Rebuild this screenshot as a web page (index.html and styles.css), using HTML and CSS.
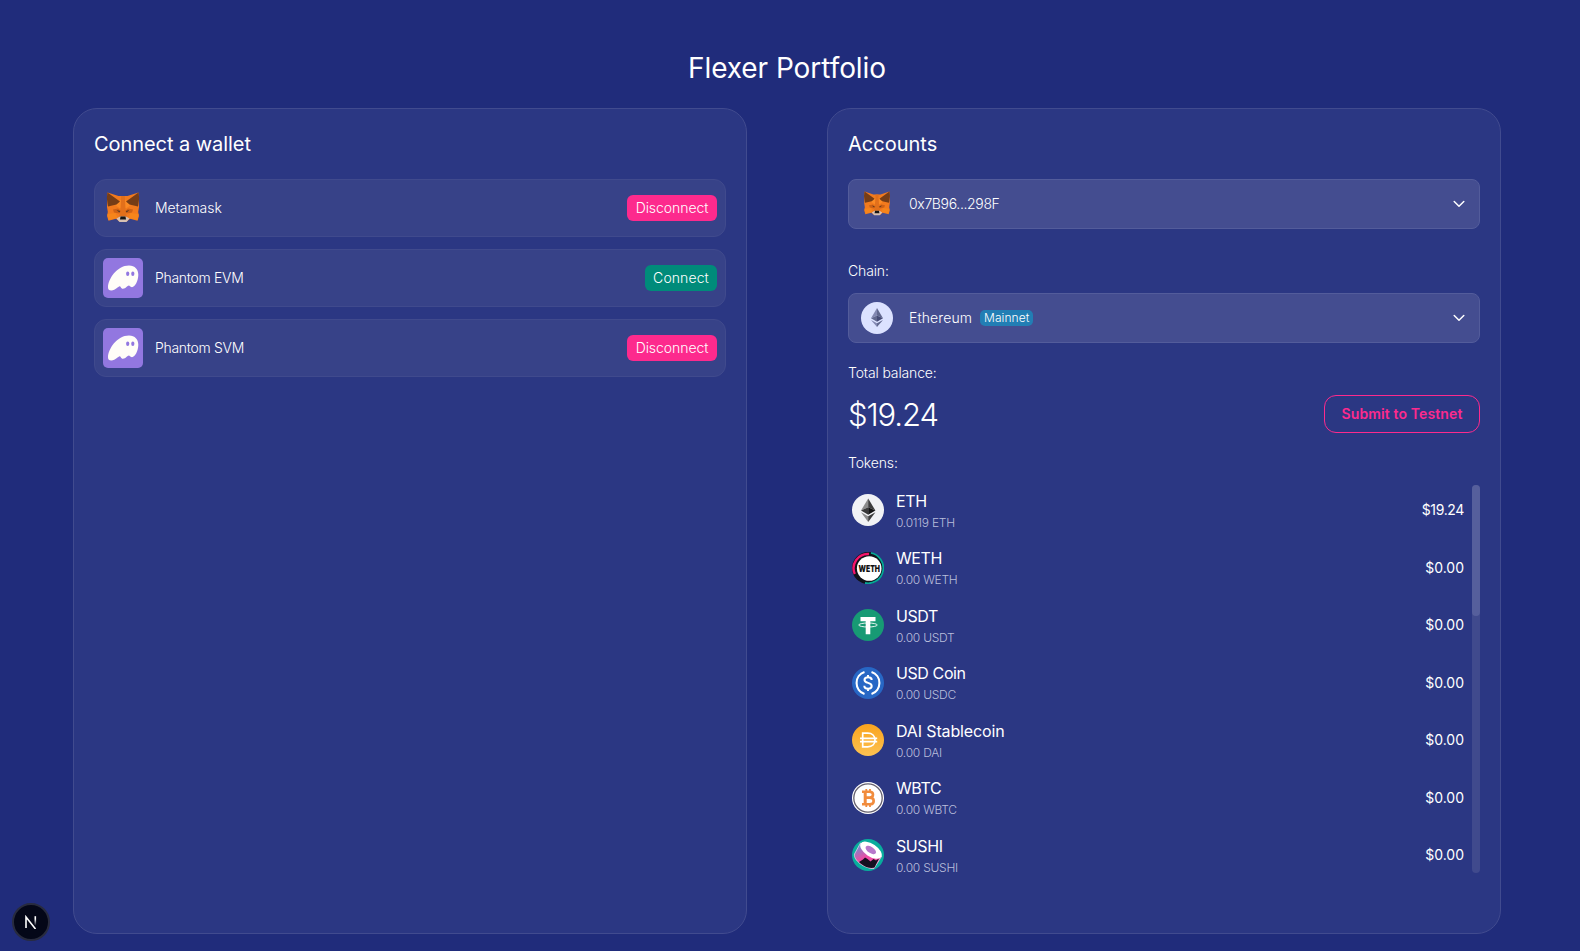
FILE: index.html
```html
<!DOCTYPE html>
<html lang="en">
<head>
<meta charset="utf-8">
<title>Flexer Portfolio</title>
<link rel="stylesheet" href="styles.css">
</head>
<body>
<svg class="defs" width="0" height="0" aria-hidden="true">
  <symbol id="fox" viewBox="0 0 40 40">
    <path fill="#f27a1d" d="M4.500 4.500 15.500 8h9L35.500 4.500 36 19l-.8 5 .8 4-1.500 4.800-7.500-2-3 2.500h-8l-3-2.500-7.500 2L4 28l.8-4L4 19z"/>
    <path fill="#fb8a24" d="m12 17 5.500-5h5l5.500 5-4.500 3h-7z"/>
    <path fill="#e2701b" d="M18.200 8h3.600l.8 14 1.400 7h-8l1.400-7z"/>
    <path fill="#cd6116" d="m10 21.500 5-1 3 2.500-2 2.500-5-1zM30 21.500l-5-1-3 2.500 2 2.500 5-1z"/>
    <path fill="#f6851b" d="m4.500 26 8-1 2 5-9 2zM35.500 26l-8-1-2 5 9 2z"/>
    <path fill="#763d16" d="M4.500 4.500 17 13.500 13.500 16.500 5 18.500 3.800 10zM35.500 4.500 23 13.500l3.500 3 8.500 2 1.200-8.500z"/>
    <path fill="#503522" d="m13.500 22 3.500 1-.5 1.500zM26.500 22 23 23l.5 1.500z"/>
    <path fill="#d7c1b3" d="m13.500 30.500 3.500-2h6l3.500 2-3 3.500h-7z"/>
    <path fill="#161616" d="m17.500 28.500h5l.5 3h-6z"/>
  </symbol>
  <symbol id="ghost" viewBox="0 0 40 40">
    <rect width="40" height="40" rx="5" fill="#9277e0"/>
    <path fill="#fffdf8" d="M5 29.500C5 21 14 7.500 26 7.500c6 0 9.300 4 9.300 9.300 0 6-3.300 12.400-6.300 12.400-2.200 0-2-1.600-3.200-1.600-1.400 0-3 3.200-5.800 3.200-2.400 0-2-2.500-3.400-2.500-1.300 0-4 4.200-8.300 4.200-2.200 0-3.300-1.200-3.300-3z"/>
    <ellipse cx="24.700" cy="15.800" rx="1.600" ry="2.200" fill="#9277e0"/><ellipse cx="29.800" cy="15.800" rx="1.600" ry="2.200" fill="#9277e0"/>
  </symbol>
  <symbol id="ethereum" viewBox="0 0 32 32">
    <circle cx="16" cy="16" r="16" fill="#dce2ff"/>
    <path fill="#8388b2" d="m16 6-6 10.200 6-2.700z"/><path fill="#62688f" d="m16 6 6 10.200-6-2.700z"/>
    <path fill="#62688f" d="m10 16.200 6-2.700v6.200z"/><path fill="#454a75" d="m22 16.200-6-2.700v6.200z"/>
    <path fill="#8388b2" d="m10 18 6 3.300V25z"/><path fill="#62688f" d="m22 18-6 3.300V25z"/>
  </symbol>
  <symbol id="eth" viewBox="0 0 32 32">
    <circle cx="16" cy="16" r="16" fill="#f1f2f5"/>
    <path fill="#8b8b8b" d="m16.200 4.500-7.200 12 7.200-3.300z"/><path fill="#3d3d3d" d="m16.200 4.500 7.200 12-7.200-3.300z"/>
    <path fill="#393939" d="m9 16.500 7.200-3.300v7.500z"/><path fill="#141414" d="m23.400 16.500-7.200-3.300v7.500z"/>
    <path fill="#8b8b8b" d="m9 18.300 7.200 4V28z"/><path fill="#3d3d3d" d="m23.400 18.300-7.200 4V28z"/>
  </symbol>
  <symbol id="usdt" viewBox="0 0 32 32">
    <circle cx="16" cy="16" r="16" fill="#179a74"/>
    <path fill="#fff" d="M8.500 8h15v4.200h-5.200v13h-4.600v-13H8.500z"/>
    <ellipse cx="16" cy="16" rx="9.300" ry="2" fill="none" stroke="#fff" stroke-width=".9"/>
  </symbol>
  <symbol id="usdc" viewBox="0 0 32 32">
    <circle cx="16" cy="16" r="16" fill="#2767c5"/>
    <path d="M12.500 5a11.600 11.600 0 0 0 0 22M19.500 5a11.600 11.600 0 0 1 0 22" fill="none" stroke="#fff" stroke-width="2.100"/>
    <path d="M19.700 13c0-1.800-1.600-2.700-3.600-2.700s-3.600 1-3.600 2.700c0 3.800 7.200 2 7.200 5.900 0 1.800-1.600 2.800-3.600 2.800s-3.800-1-3.800-2.900M16 8v2.500m0 11V24" fill="none" stroke="#fff" stroke-width="2"/>
  </symbol>
  <linearGradient id="daiFill" x2="0" y2="1"><stop stop-color="#f9a31d"/><stop offset="1" stop-color="#fdc252"/></linearGradient>
  <symbol id="dai" viewBox="0 0 32 32">
    <circle cx="16" cy="16" r="16" fill="url(#daiFill)"/>
    <path d="M10.700 9.200h5c4.500 0 7.300 2.800 7.300 6.800s-2.800 6.800-7.300 6.800h-5zM8 14.300h17.200M8 17.700h17.200" fill="none" stroke="#fff" stroke-width="1.700"/>
  </symbol>
  <symbol id="wbtc" viewBox="0 0 32 32">
    <circle cx="16" cy="16" r="16" fill="#fff"/>
    <circle cx="16" cy="16" r="14.200" fill="none" stroke="#66616e" stroke-width="1.300"/>
    <path d="M10 9.700h7.500c2.200 0 3.500 1 3.500 2.900s-1.300 3-3.300 3H13h4.700c2.500 0 4 1.200 4 3.300s-1.500 3.400-4 3.400H10" fill="none" stroke="#f18c3d" stroke-width="2.600"/>
    <path d="M13.200 9v14" fill="none" stroke="#f18c3d" stroke-width="3"/>
    <path d="M14.300 7v3m3.700-3v3m-3.700 12v3m3.700-3v3" fill="none" stroke="#f18c3d" stroke-width="1.800"/>
  </symbol>
  <linearGradient id="rollFill" x1=".1" x2=".5" y1=".1" y2=".8"><stop stop-color="#698fd1"/><stop offset=".7" stop-color="#f04ca4"/></linearGradient>
  <symbol id="sushi" viewBox="0 0 32 32">
    <circle cx="16" cy="16" r="16" fill="#08ad9d"/>
    <path d="M8.500 4 2.500 15c-1.500 6 10 15 19.500 14.500l7.500-12z" fill="url(#rollFill)" stroke="#f4d8ee" stroke-width=".7"/>
    <path d="m7 23 4-2.500 2-2 2.500 1.500 3 2.500 3-2.500 2.500 1.500 3-2-4.500 9C17 30 11 27 7 23z" fill="#151020"/>
    <ellipse cx="19" cy="11.200" rx="12.300" ry="6.300" transform="rotate(34 19 11.200)" fill="#fff"/>
    <ellipse cx="18.800" cy="11" rx="6" ry="3" transform="rotate(34 18.800 11)" fill="#b777cb"/>
  </symbol>
  <symbol id="chevron" viewBox="0 0 12 8"><path d="m1.200 1.500 4.800 4.700 4.800-4.700" fill="none" stroke="#fff" stroke-width="1.500" stroke-linecap="round" stroke-linejoin="round"/></symbol>
</svg>

<main class="page">
  <h1 class="title">Flexer Portfolio</h1>
  <div class="panels">
    <section class="panel">
      <h2 class="heading heading-wallet">Connect a wallet</h2>
      <ul class="wallets">
        <li class="wallet"><svg class="wallet-icon"><use href="#fox"/></svg><span class="wallet-name">Metamask</span><button class="action danger">Disconnect</button></li>
        <li class="wallet"><svg class="wallet-icon"><use href="#ghost"/></svg><span class="wallet-name tight">Phantom EVM</span><button class="action success">Connect</button></li>
        <li class="wallet"><svg class="wallet-icon"><use href="#ghost"/></svg><span class="wallet-name tight">Phantom SVM</span><button class="action danger">Disconnect</button></li>
      </ul>
    </section>
    <section class="panel">
      <h2 class="heading">Accounts</h2>
      <div class="select"><svg class="select-icon"><use href="#fox"/></svg><span class="address">0x7B96...298F</span><svg class="chevron"><use href="#chevron"/></svg></div>
      <p class="label label-chain">Chain:</p>
      <div class="select"><svg class="select-icon"><use href="#ethereum"/></svg><span class="chain">Ethereum</span><span class="badge">Mainnet</span><svg class="chevron"><use href="#chevron"/></svg></div>
      <p class="label label-total">Total balance:</p>
      <div class="balance"><span class="amount">$19.24</span><button class="submit">Submit to Testnet</button></div>
      <p class="label label-tokens">Tokens:</p>
      <div class="token-area">
        <ul class="tokens">
          <li class="token"><svg class="coin"><use href="#eth"/></svg><div class="info"><span class="name">ETH</span><span class="qty">0.0119 ETH</span></div><span class="value value-long">$19.24</span></li>
          <li class="token">
            <svg class="coin" viewBox="0 0 32 32">
              <circle cx="16" cy="16" r="16" fill="#10131a"/>
              <path d="M2.800 22A14.300 14.300 0 0 1 17 2" fill="none" stroke="#f5146c" stroke-width="2.400"/>
              <path d="M19 .9A15.300 15.300 0 0 1 13 31" fill="none" stroke="#05a898" stroke-width="1.800"/>
              <circle cx="17.200" cy="16.500" r="12.300" fill="#fff"/>
              <text x="6.500" y="20.200" textLength="21.500" lengthAdjust="spacingAndGlyphs" class="coin-text">WETH</text>
            </svg>
            <div class="info"><span class="name">WETH</span><span class="qty">0.00 WETH</span></div><span class="value">$0.00</span></li>
          <li class="token"><svg class="coin"><use href="#usdt"/></svg><div class="info"><span class="name">USDT</span><span class="qty">0.00 USDT</span></div><span class="value">$0.00</span></li>
          <li class="token"><svg class="coin"><use href="#usdc"/></svg><div class="info"><span class="name">USD Coin</span><span class="qty">0.00 USDC</span></div><span class="value">$0.00</span></li>
          <li class="token"><svg class="coin"><use href="#dai"/></svg><div class="info"><span class="name name-long">DAI Stablecoin</span><span class="qty">0.00 DAI</span></div><span class="value">$0.00</span></li>
          <li class="token"><svg class="coin"><use href="#wbtc"/></svg><div class="info"><span class="name">WBTC</span><span class="qty">0.00 WBTC</span></div><span class="value">$0.00</span></li>
          <li class="token"><svg class="coin"><use href="#sushi"/></svg><div class="info"><span class="name">SUSHI</span><span class="qty">0.00 SUSHI</span></div><span class="value">$0.00</span></li>
        </ul>
        <div class="track"><div class="thumb"></div></div>
      </div>
    </section>
  </div>
</main>
<div class="dev-badge"><svg width="14" height="14" viewBox="0 0 14 14"><defs><linearGradient id="fade" x2="0" y2="1"><stop offset=".3" stop-color="#fff"/><stop offset="1" stop-color="#fff" stop-opacity="0"/></linearGradient></defs><path d="M2 13V2l9.500 12" fill="none" stroke="#fff" stroke-width="1.600"/><path d="M10.500 1.200h1.600v9.500h-1.600z" fill="url(#fade)"/></svg></div>
</body>
</html>
```
FILE: styles.css
```css
* { box-sizing: border-box; margin: 0; padding: 0; }
body { height: 951px; overflow: hidden; background: #202c7b; color: #fff; font-family: Inter, "Liberation Sans", sans-serif; font-size: 14px; font-weight: 350; line-height: 20px; letter-spacing: -.06px; }
ul { list-style: none; }
button { border: 0; font: inherit; letter-spacing: inherit; color: inherit; }
svg { display: block; flex: none; }
.defs { position: absolute; }
.page { width: 1428px; margin-left: 73px; padding-top: 48px; }
.title { height: 60px; text-align: center; font-size: 28px; font-weight: 400; line-height: 40px; letter-spacing: -.06px; }
.panels { display: grid; grid-template-columns: 1fr 1fr; gap: 80px; }
.panel { height: 826px; padding: 20px; border: 1px solid #414b8f; border-radius: 24px; background: #2b3783; }
.heading { margin-bottom: 20px; font-size: 20px; font-weight: 400; line-height: 30px; letter-spacing: 0; }
.heading-wallet { letter-spacing: -.06px; }
.wallets { display: flex; flex-direction: column; gap: 12px; }
.wallet { display: flex; align-items: center; height: 58px; padding: 0 8px; border: 1px solid #404a8d; border-radius: 12px; background: #374288; }
.wallet-icon { width: 40px; height: 40px; margin-right: 12px; }
.wallet-name { flex: 1; }
.tight { letter-spacing: -.3px; }
.action { height: 26px; border-radius: 6px; line-height: 26px; }
.danger { width: 90px; background: #fd2a8d; }
.success { width: 72px; background: #008b7a; letter-spacing: .1px; }
.select { display: flex; align-items: center; height: 50px; padding: 0 14px 0 12px; border: 1px solid #535c9b; border-radius: 8px; background: #444d90; }
.select-icon { width: 32px; height: 32px; margin-right: 16px; }
.address { letter-spacing: -.35px; }
.chain { letter-spacing: .1px; }
.chevron { width: 12px; height: 8px; margin-left: auto; }
.badge { height: 16px; margin-left: 8px; padding: 0 4px; border-radius: 5px; background: #227eb4; font-size: 12px; line-height: 16px; letter-spacing: .08px; }
.label-chain { margin: 32px 0 12px; }
.label-total { margin: 20px 0 12px; }
.label-tokens { margin: 20px 0 12px; }
.label { letter-spacing: -.14px; }
.balance { display: flex; align-items: center; justify-content: space-between; height: 38px; }
.amount { padding-top: 1px; font-size: 31px; font-weight: 300; line-height: 38px; letter-spacing: -1.1px; }
.submit { width: 156px; height: 38px; border: 1px solid #fd2a8d; border-radius: 12px; background: none; color: #fd2a8d; font-weight: 600; letter-spacing: .12px; }
.token-area { display: flex; gap: 8px; height: 388px; overflow: hidden; }
.tokens { flex: 1; }
.token { display: flex; align-items: center; height: 57.500px; padding: 0 0 7px 4px; }
.coin { width: 32px; height: 32px; margin-right: 12px; }
.info { display: flex; flex: 1; flex-direction: column; }
.name { font-size: 16px; line-height: 24px; font-weight: 400; letter-spacing: -.4px; }
.name-long { letter-spacing: -.14px; }
.qty { padding-top: 1px; color: #b9bedb; font-size: 12px; font-weight: 300; line-height: 18px; letter-spacing: -.25px; }
.value { font-weight: 400; letter-spacing: 0; }
.value-long { letter-spacing: -.35px; }
.track { width: 8px; border-radius: 4px; background: #404a8d; }
.thumb { height: 131px; border-radius: 4px; background: #565f9c; }
.coin-text { font: 900 9.500px Inter, sans-serif; letter-spacing: 0; fill: #111; }
.dev-badge { position: fixed; left: 12px; bottom: 10px; display: grid; width: 38px; height: 38px; place-items: center; border: 2px solid #282b3e; border-radius: 50%; background: #040718; }
```
